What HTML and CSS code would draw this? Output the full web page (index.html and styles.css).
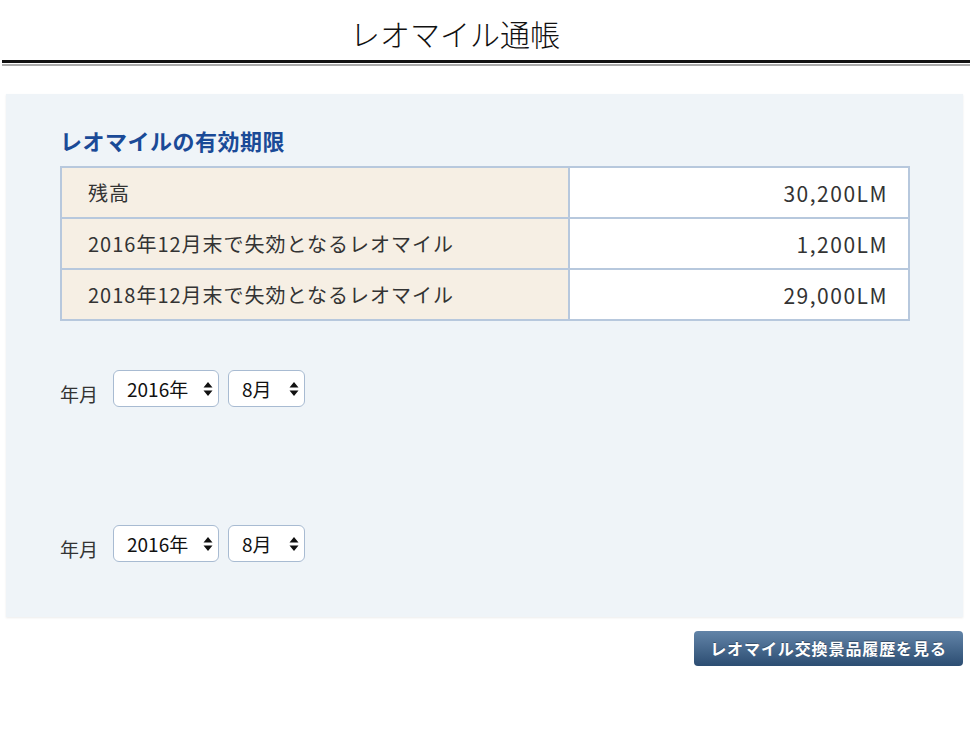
FILE: index.html
```html
<!DOCTYPE html>
<html lang="ja">
<head>
    <meta charset="UTF-8">
    <meta name="viewport" content="width=device-width, initial-scale=1.0">
    <title>レオマイル通帳</title>
    <link rel="stylesheet" href="styles.css">
</head>
<body>
    <header>
        <h1>レオマイル通帳</h1>
        <div class="rule"></div>
    </header>
    <div class="panel">
        <h2>レオマイルの有効期限</h2>
        <table class="miles">
            <tr>
                <th>残高</th>
                <td>30,200LM</td>
            </tr>
            <tr>
                <th>2016年12月末で失効となるレオマイル</th>
                <td>1,200LM</td>
            </tr>
            <tr>
                <th>2018年12月末で失効となるレオマイル</th>
                <td>29,000LM</td>
            </tr>
        </table>

        <!-- 年月の選択 -->
        <div class="month-row first">
            <span class="month-label">年月</span>
            <label class="select-box year">
                <select>
                    <option>2016年</option>
                    <option>2017年</option>
                    <option>2018年</option>
                </select>
                <svg class="arrows" width="10" height="16" viewBox="0 0 10 16"><path d="M5 1 L9.5 6.5 H0.5 Z M5 15 L9.5 9.5 H0.5 Z" fill="#111"/></svg>
            </label>
            <label class="select-box month">
                <select>
                    <option>8月</option>
                    <option>9月</option>
                    <option>10月</option>
                </select>
                <svg class="arrows" width="10" height="16" viewBox="0 0 10 16"><path d="M5 1 L9.5 6.5 H0.5 Z M5 15 L9.5 9.5 H0.5 Z" fill="#111"/></svg>
            </label>
        </div>

        <div class="month-row second">
            <span class="month-label">年月</span>
            <label class="select-box year">
                <select>
                    <option>2016年</option>
                    <option>2017年</option>
                    <option>2018年</option>
                </select>
                <svg class="arrows" width="10" height="16" viewBox="0 0 10 16"><path d="M5 1 L9.5 6.5 H0.5 Z M5 15 L9.5 9.5 H0.5 Z" fill="#111"/></svg>
            </label>
            <label class="select-box month">
                <select>
                    <option>8月</option>
                    <option>9月</option>
                    <option>10月</option>
                </select>
                <svg class="arrows" width="10" height="16" viewBox="0 0 10 16"><path d="M5 1 L9.5 6.5 H0.5 Z M5 15 L9.5 9.5 H0.5 Z" fill="#111"/></svg>
            </label>
        </div>
    </div>
    <div class="actions">
        <a class="history-btn" href="#">レオマイル交換景品履歴を見る</a>
    </div>
</body>
</html>
```

FILE: styles.css
```css
body {
    font-family: "Noto Sans CJK JP", "Noto Sans", sans-serif;
    background-color: #ffffff;
    color: #333;
    margin: 0;
    padding: 0;
}
header h1 {
    margin: 0;
    padding: 13px 62px 7px 0;
    line-height: 40px;
    font-size: 30px;
    font-weight: 300;
    color: #111;
    text-align: center;
}
.rule {
    margin: 0 2px;
    height: 1px;
    border-top: 3px solid #111;
    border-bottom: 2px solid #aaa;
}
.panel {
    margin: 28px 9px 0 6px;
    padding: 30px 53px 55px 54px;
    background-color: #eff4f8;
    box-shadow: 0 1px 2px rgba(0, 0, 0, 0.08);
}
h2 {
    margin: 0 0 10px;
    line-height: 32px;
    font-size: 22px;
    font-weight: bold;
    letter-spacing: 0.5px;
    color: #1a4a97;
}
.miles {
    width: 100%;
    border-collapse: collapse;
    border: 2px solid #b7c8dd;
}
.miles th,
.miles td {
    height: 49px;
    padding: 0;
    border: 2px solid #b7c8dd;
    font-weight: normal;
    color: #333;
}
.miles th {
    width: 480px;
    padding-left: 26px;
    text-align: left;
    font-size: 20px;
    letter-spacing: 1px;
    background-color: #f6efe4;
}
.miles td {
    padding-right: 20px;
    text-align: right;
    font-size: 21px;
    letter-spacing: 1.5px;
    background-color: #ffffff;
}
.month-row {
    display: flex;
    align-items: center;
}
.month-row.first {
    margin-top: 49px;
}
.month-row.second {
    margin-top: 118px;
}
.month-label {
    font-size: 19px;
    color: #333;
    padding-top: 10px;
    margin-right: 15px;
}
.select-box {
    position: relative;
    display: block;
    margin-right: 9px;
}
.select-box select {
    appearance: none;
    -webkit-appearance: none;
    height: 37px;
    border: 1.5px solid #a8bbd2;
    border-radius: 6px;
    background-color: #fff;
    font-family: "Noto Sans CJK JP", "Noto Sans", sans-serif;
    font-size: 19px;
    color: #111;
    padding: 0 0 0 13px;
    outline: none;
}
.select-box.year select {
    width: 106px;
}
.select-box.month select {
    width: 77px;
}
.arrows {
    position: absolute;
    right: 6px;
    top: 11px;
    pointer-events: none;
}
.actions {
    display: flex;
    justify-content: flex-end;
    margin: 14px 9px 0 0;
}
.history-btn {
    display: block;
    width: 269px;
    height: 35px;
    line-height: 35px;
    text-align: center;
    border-radius: 4px;
    background: linear-gradient(#6284a8, #2c4d72);
    color: #fff;
    font-size: 16px;
    font-weight: bold;
    letter-spacing: 0.9px;
    text-decoration: none;
    text-shadow: 0 -1px 0 rgba(0, 0, 0, 0.3);
}
```
